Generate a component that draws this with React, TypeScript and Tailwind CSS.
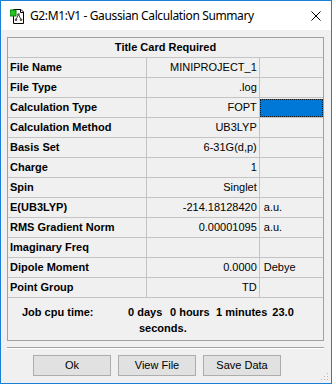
import React from "react";

const rows: { label: string; value: string; unit?: string; selected?: boolean }[] = [
  { label: "File Name", value: "MINIPROJECT_1" },
  { label: "File Type", value: ".log" },
  { label: "Calculation Type", value: "FOPT", selected: true },
  { label: "Calculation Method", value: "UB3LYP" },
  { label: "Basis Set", value: "6-31G(d,p)" },
  { label: "Charge", value: "1" },
  { label: "Spin", value: "Singlet" },
  { label: "E(UB3LYP)", value: "-214.18128420", unit: "a.u." },
  { label: "RMS Gradient Norm", value: "0.00001095", unit: "a.u." },
  { label: "Imaginary Freq", value: "" },
  { label: "Dipole Moment", value: "0.0000", unit: "Debye" },
  { label: "Point Group", value: "TD" },
];

function AppIcon() {
  return (
    <svg width="16" height="16" viewBox="0 0 16 16">
      <path d="M3.5 1.5 H11 L13.5 4 V15.5 H3.5 Z" fill="#fff" stroke="#000" />
      <path d="M10.5 1.5 V4.5 H13.5" fill="none" stroke="#000" />
      <rect x="0" y="2" width="6" height="6" fill="#22c722" stroke="#0a7a0a" strokeWidth="1" />
      <path d="M8.5 6.5 L6 11.5 M8.5 6.5 L11 11.5" stroke="#444" strokeWidth="1" />
      <circle cx="8.5" cy="6.5" r="1.3" fill="#555" />
      <circle cx="6" cy="11.8" r="1.3" fill="#555" />
      <circle cx="11" cy="11.8" r="1.3" fill="#555" />
    </svg>
  );
}

export default function App() {
  const sans = { fontFamily: '"Liberation Sans", Arial, sans-serif' };
  return (
    <div className="w-[332px] h-[384px] border border-[#1a7fd6] bg-[#f0f0f0] flex flex-col relative overflow-hidden">
      {/* Title bar */}
      <div className="h-[29px] bg-white flex items-center shrink-0">
        <div className="ml-[9px] mt-[1px]">
          <AppIcon />
        </div>
        <span
          className="ml-[4px] text-[12px] text-black"
          style={{ fontFamily: '"Noto Sans", "Open Sans", sans-serif', letterSpacing: "-0.38px" }}
        >
          G2:M1:V1 - Gaussian Calculation Summary
        </span>
        <div className="ml-auto mr-[10px] mt-[1px]">
          <svg width="10" height="10" viewBox="0 0 10 10">
            <path d="M0.5 0.5 L9.5 9.5 M9.5 0.5 L0.5 9.5" stroke="#000" strokeWidth="1" />
          </svg>
        </div>
      </div>

      {/* Content */}
      <div className="flex flex-col px-[6px] pt-[7px]" style={sans}>
        <div className="w-[317px] border border-[#a0a0a0] flex flex-col text-[11px] text-black">
          <div className="h-[20px] border-b border-[#c4c4c4] flex items-center justify-center font-bold">
            Title Card Required
          </div>
          {rows.map((r) => (
            <div key={r.label} className="h-[20px] border-b border-[#c4c4c4] flex">
              <div className="w-[138px] border-r border-[#c4c4c4] box-content flex items-center pl-[2px] font-bold whitespace-nowrap">
                {r.label}
              </div>
              <div className="w-[111px] border-r border-[#c4c4c4] box-content flex items-center justify-end pr-[2px] whitespace-nowrap">
                {r.value}
              </div>
              <div className="w-[64px] flex items-center pl-[4px] whitespace-nowrap">
                {r.selected ? (
                  <div className="w-[63px] h-[18px] -ml-[4px] bg-[#0078d7] outline-1 outline-dotted outline-[#1a1a1a] -outline-offset-1" />
                ) : (
                  r.unit ?? ""
                )}
              </div>
            </div>
          ))}
          <div className="h-[42px] flex font-bold pt-[7px]">
            <div className="w-[120px] pl-[14px] whitespace-nowrap leading-[14px]">Job cpu time:</div>
            <div className="flex flex-col">
              <div className="flex leading-[14px] whitespace-nowrap">
                <span className="w-[42px]">0 days</span>
                <span className="w-[46px]">0 hours</span>
                <span>1 minutes</span>
                <span className="ml-[5px]">23.0</span>
              </div>
              <span className="pl-[11px] leading-[18px]">seconds.</span>
            </div>
          </div>
        </div>

        {/* separator */}
        <div className="w-[317px] mt-[6px] border-t border-[#a0a0a0] border-b border-b-white" />

        {/* buttons */}
        <div className="flex gap-[7px] pl-[26px] mt-[6px] text-[11px]">
          {["Ok", "View File", "Save Data"].map((b) => (
            <div
              key={b}
              className="w-[78px] h-[21px] bg-[#e1e1e1] border border-[#adadad] flex items-center justify-center text-black"
            >
              {b}
            </div>
          ))}
        </div>
      </div>

      {/* size grip */}
      <div className="absolute right-[1px] bottom-[1px]">
        <svg width="10" height="10" viewBox="0 0 10 10">
          <rect x="7" y="1" width="1" height="1" fill="#b8b8b8" />
          <rect x="4" y="4" width="1" height="1" fill="#b8b8b8" />
          <rect x="7" y="4" width="1" height="1" fill="#b8b8b8" />
          <rect x="1" y="7" width="1" height="1" fill="#b8b8b8" />
          <rect x="4" y="7" width="1" height="1" fill="#b8b8b8" />
          <rect x="7" y="7" width="1" height="1" fill="#b8b8b8" />
        </svg>
      </div>
    </div>
  );
}
